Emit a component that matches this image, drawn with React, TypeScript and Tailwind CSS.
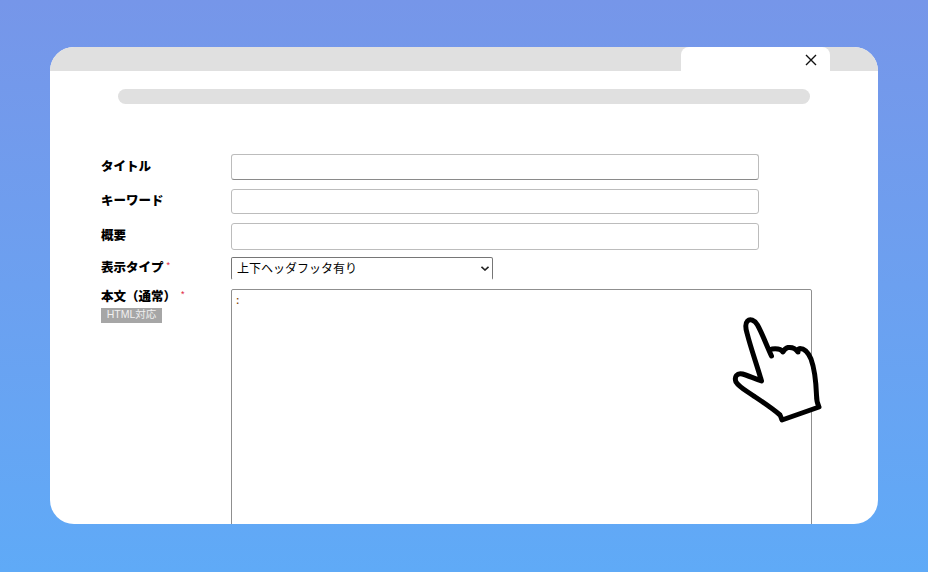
const jp = "font-['Liberation_Sans','Noto_Sans_CJK_JP',sans-serif]";

function Label({ text, star, gap }: { text: string; star?: boolean; gap?: string }) {
  return (
    <span className="block text-[12.5px] leading-[18px] font-black text-black whitespace-nowrap">
      {text}
      {star && <span className={`text-[9px] font-normal leading-[12px] text-[#e0203c] align-top ${gap ?? "ml-[3px]"}`}>*</span>}
    </span>
  );
}

function Field({ label, h, b, shift }: { label: string; h: string; b: string; shift: string }) {
  return (
    <div className="flex items-center">
      <div className={`w-[130px] ${shift}`}>
        <Label text={label} />
      </div>
      <div className={`w-[528px] bg-white border border-[#bcbcbc] rounded-[3px] ${h} ${b}`} />
    </div>
  );
}

function Hand() {
  return (
    <svg viewBox="0 0 115 125" className="absolute left-[670px] top-[258px] w-[115px] h-[125px]" fill="white" stroke="black" strokeWidth="5" strokeLinejoin="round" strokeLinecap="round">
      <path d="M51.5 51 C46 39 42 28 37.5 20 C34.5 15 30 13.5 27.5 16 C25 18.5 25.5 23 27 28 C31 44 37 60 41.5 76 C34 73.5 28 70.5 22.5 69 C17 67.5 14 72 16 77 C19 82 25 85 33 90.5 C42 96.5 52 103 60 110 C61 112 61.5 113.5 62 115 L99 102 C97 98 96.5 95 96.5 90 C96 77 95 65 91 54 C88 47 85 43.5 80 43.5 C78.5 43.5 78 45 78 47 C76 44 72 42 68 42.5 C65.5 43 64 45 63 47 C61 44 56 43.5 52 44" />
    </svg>
  );
}

export default function App() {
  return (
    <div className={`h-[572px] w-[928px] overflow-hidden bg-gradient-to-b from-[#7696e9] to-[#5faaf7] px-[50px] pt-[47px] ${jp}`}>
      <div className="relative h-[477px] w-[828px] overflow-hidden rounded-[24px] bg-white">
        <div className="flex h-6 justify-end bg-[#e0e0e0] pr-12">
          <div className="flex w-[149px] justify-end rounded-t-lg bg-white pr-[13px] pt-[7px]">
            <svg viewBox="0 0 12 12" className="h-3 w-3" stroke="#111" strokeWidth="1.4" fill="none">
              <path d="M1 1 L11 11 M11 1 L1 11" />
            </svg>
          </div>
        </div>
        <div className="mx-[68px] mt-[18px] h-[15px] w-[692px] rounded-full bg-[#e0e0e0]" />
        <div className="flex flex-col pl-[51px] pt-[50px]">
          <Field label="タイトル" h="h-[26px]" b="border-b-[#8a8a8a]" shift="mt-0" />
          <div className="mt-[9px]"><Field label="キーワード" h="h-[25px]" b="" shift="-mt-[2px]" /></div>
          <div className="mt-[9px]"><Field label="概要" h="h-[27px]" b="" shift="-mt-[2px]" /></div>
          <div className="mt-[7px] flex items-start">
            <div className="w-[130px] mt-[2px]">
              <Label text="表示タイプ" star />
            </div>
            <div className="relative">
              <select className="block h-[23px] w-[262px] appearance-none rounded-[2px] border border-[#767676] border-b-transparent bg-white pl-[5px] text-[12px] text-black outline-none" defaultValue="a">
                <option value="a">上下ヘッダフッタ有り</option>
              </select>
              <svg viewBox="0 0 8 5" className="absolute right-[4px] top-[9px] h-[5px] w-[8px]" fill="none" stroke="#222" strokeWidth="1.6">
                <path d="M0.5 0.8 L4 4 L7.5 0.8" />
              </svg>
            </div>
          </div>
          <div className="mt-[9px] flex items-start">
            <div className="w-[130px] -mt-[1px]">
              <Label text="本文（通常）" star gap="ml-[5px]" />
              <div className="mt-[2px] h-[15px] w-[61px] bg-[#a6a6a6] text-center text-[10.5px] leading-[12px] text-[#f0f0f0]">HTML対応</div>
            </div>
            <div className="h-[260px] w-[581px] rounded-[2px] border border-[#8f8f8f] bg-white pl-[4px] pt-[4px] text-[10px] font-bold leading-[14px] text-[#8a4a10]">:</div>
          </div>
        </div>
        <Hand />
      </div>
    </div>
  );
}
